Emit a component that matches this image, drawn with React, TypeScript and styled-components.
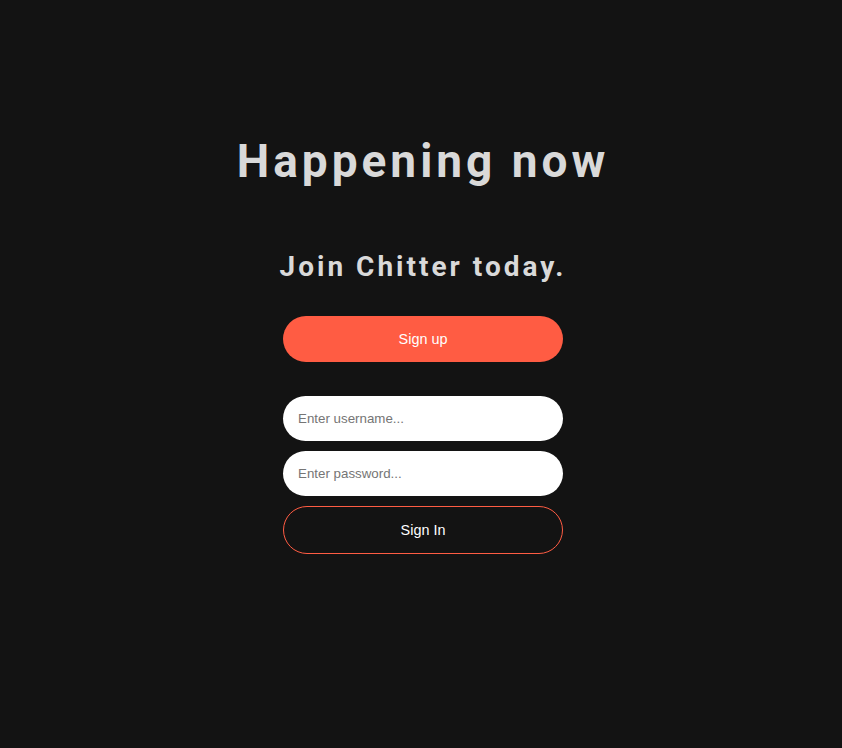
import React from "react";
import styled, { createGlobalStyle } from "styled-components";

const Global = createGlobalStyle`
  html, body { margin: 0; padding: 0; background: #131313; }
  body { min-height: 748px; font-family: "Liberation Sans", Arial, sans-serif; }
`;

const Page = styled.main`
  display: flex;
  flex-direction: column;
  align-items: center;
  padding: 133px 0 0 4px;
`;

const Title = styled.h1`
  margin: 0;
  font-family: Roboto, "Liberation Sans", sans-serif;
  font-weight: 700;
  font-size: 46px;
  line-height: 56px;
  letter-spacing: 4px;
  color: #d9d9d9;
`;

const Subtitle = styled.h2`
  margin: 61px 0 0;
  font-family: Roboto, "Liberation Sans", sans-serif;
  font-weight: 700;
  font-size: 28px;
  line-height: 34px;
  letter-spacing: 3px;
  color: #d9d9d9;
`;

const Form = styled.form`
  display: flex;
  flex-direction: column;
  width: 280px;
  gap: 10px;
`;

const PillButton = styled.button<{ $variant: "filled" | "outline" }>`
  box-sizing: border-box;
  width: 280px;
  height: ${(p) => (p.$variant === "filled" ? "46px" : "48px")};
  border-radius: 24px;
  font-family: "Liberation Sans", Arial, sans-serif;
  font-size: 14.4px;
  color: #ffffff;
  cursor: pointer;
  background: ${(p) => (p.$variant === "filled" ? "#ff5c43" : "transparent")};
  border: ${(p) => (p.$variant === "filled" ? "none" : "1px solid #ff5c43")};
`;

const SignUp = styled(PillButton)`
  margin-top: 32px;
  margin-bottom: 34px;
`;

const Input = styled.input`
  box-sizing: border-box;
  width: 280px;
  height: 45px;
  border: none;
  border-radius: 23px;
  padding: 0 15px;
  background: #ffffff;
  font-family: "Liberation Sans", Arial, sans-serif;
  font-size: 13.333px;
  color: #222;
  outline: none;
  &::placeholder { color: #757575; }
`;

export default function App() {
  return (
    <>
      <Global />
      <Page>
        <Title>Happening now</Title>
        <Subtitle>Join Chitter today.</Subtitle>
        <SignUp type="button" $variant="filled">Sign up</SignUp>
        <Form onSubmit={(e) => e.preventDefault()}>
          <Input placeholder="Enter username..." />
          <Input type="password" placeholder="Enter password..." />
          <PillButton type="submit" $variant="outline">Sign In</PillButton>
        </Form>
      </Page>
    </>
  );
}
